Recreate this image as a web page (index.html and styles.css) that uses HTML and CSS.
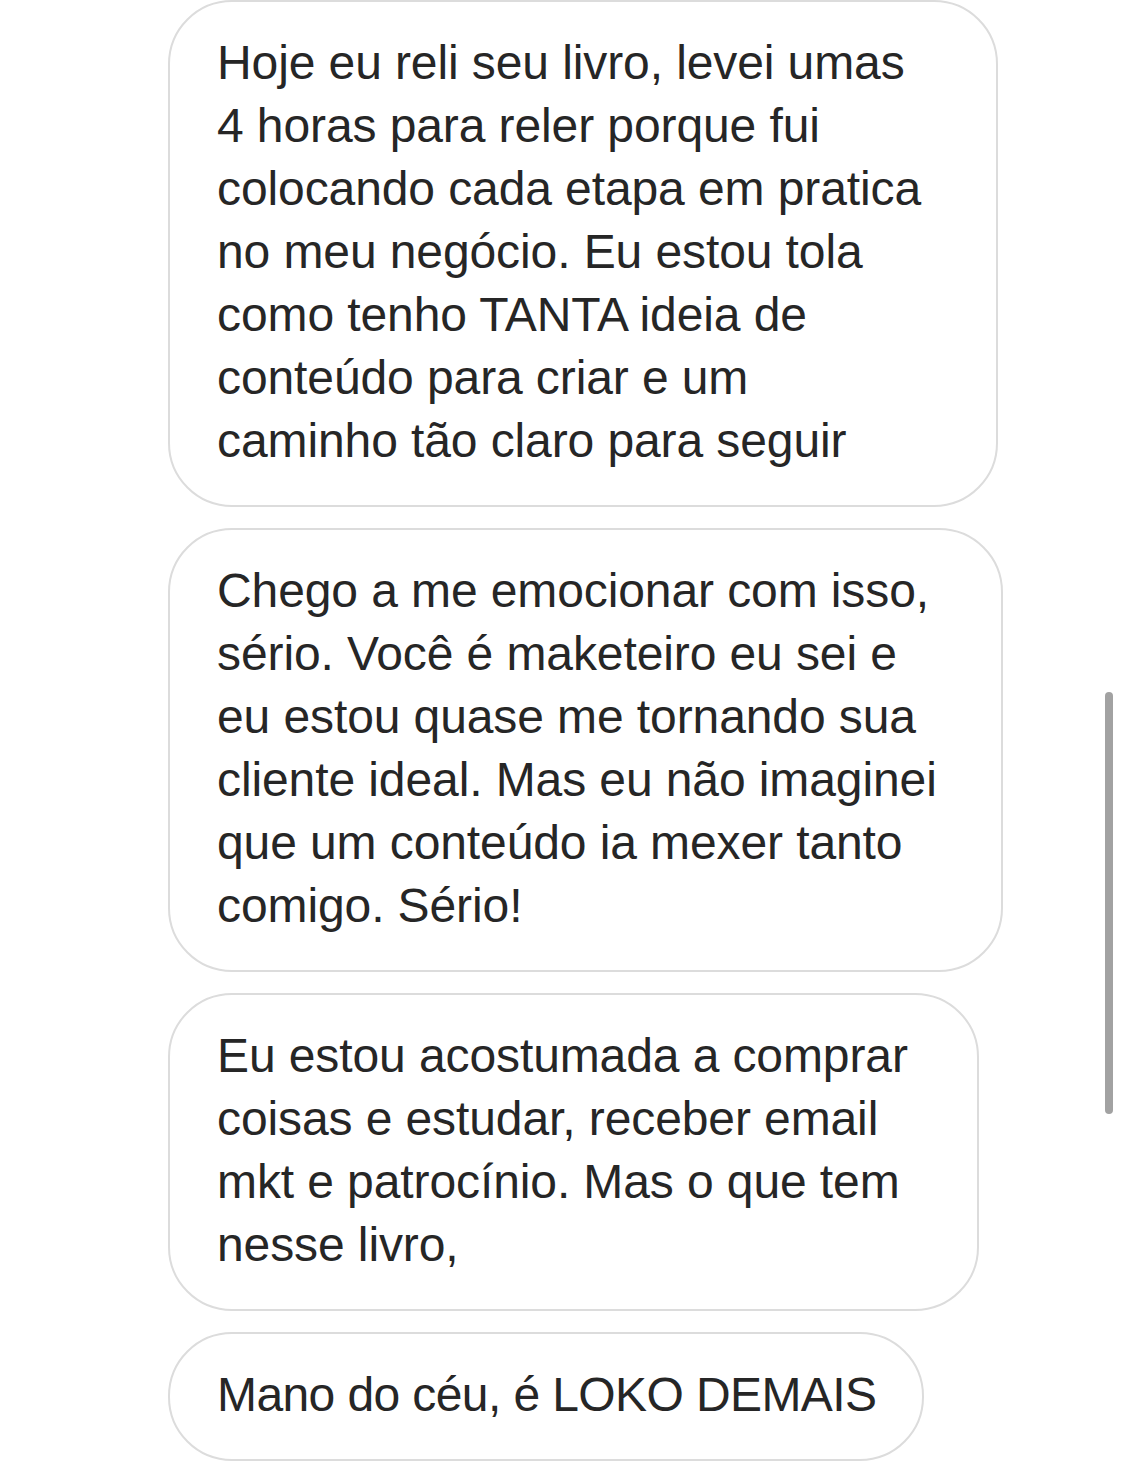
FILE: index.html
```html
<!DOCTYPE html>
<html lang="pt-BR">
<head>
<meta charset="utf-8">
<title>Mensagens</title>
<link rel="stylesheet" href="styles.css">
</head>
<body>
<main class="thread">
  <div class="bubble bubble--a">Hoje eu reli seu livro, levei umas<br>4 horas para reler porque fui<br>colocando cada etapa em pratica<br>no meu negócio. Eu estou tola<br>como tenho TANTA ideia de<br>conteúdo para criar e um<br>caminho tão claro para seguir</div>
  <div class="bubble bubble--b">Chego a me emocionar com isso,<br>sério. Você é maketeiro eu sei e<br>eu estou quase me tornando sua<br>cliente ideal. Mas eu não imaginei<br>que um conteúdo ia mexer tanto<br>comigo. Sério!</div>
  <div class="bubble bubble--c">Eu estou acostumada a comprar<br>coisas e estudar, receber email<br>mkt e patrocínio. Mas o que tem<br>nesse livro,</div>
  <div class="bubble bubble--d">Mano do céu, é LOKO DEMAIS</div>
</main>
<div class="scrollbar"></div>
</body>
</html>
```
FILE: styles.css
```css
html, body {
  margin: 0;
  padding: 0;
  background: #ffffff;
}

body {
  font-family: "Liberation Sans", Arial, sans-serif;
  color: #262626;
  width: 1124px;
  height: 1462px;
  overflow: hidden;
  position: relative;
}

.thread {
  display: flex;
  flex-direction: column;
  align-items: flex-start;
  gap: 21px;
  padding-left: 168px;
}

.bubble {
  box-sizing: border-box;
  border: 2px solid #dcdcdc;
  border-radius: 64px;
  padding: 29px 20px 33px 47px;
  font-size: 48px;
  line-height: 63px;
  white-space: nowrap;
  letter-spacing: -0.1px;
}

.bubble--a { width: 830px; }
.bubble--b { width: 835px; }
.bubble--c { width: 811px; }
.bubble--d { width: 756px; letter-spacing: -0.6px; }

.scrollbar {
  position: absolute;
  left: 1105px;
  top: 692px;
  width: 8px;
  height: 422px;
  border-radius: 4px;
  background: #a2a2a2;
}
```
